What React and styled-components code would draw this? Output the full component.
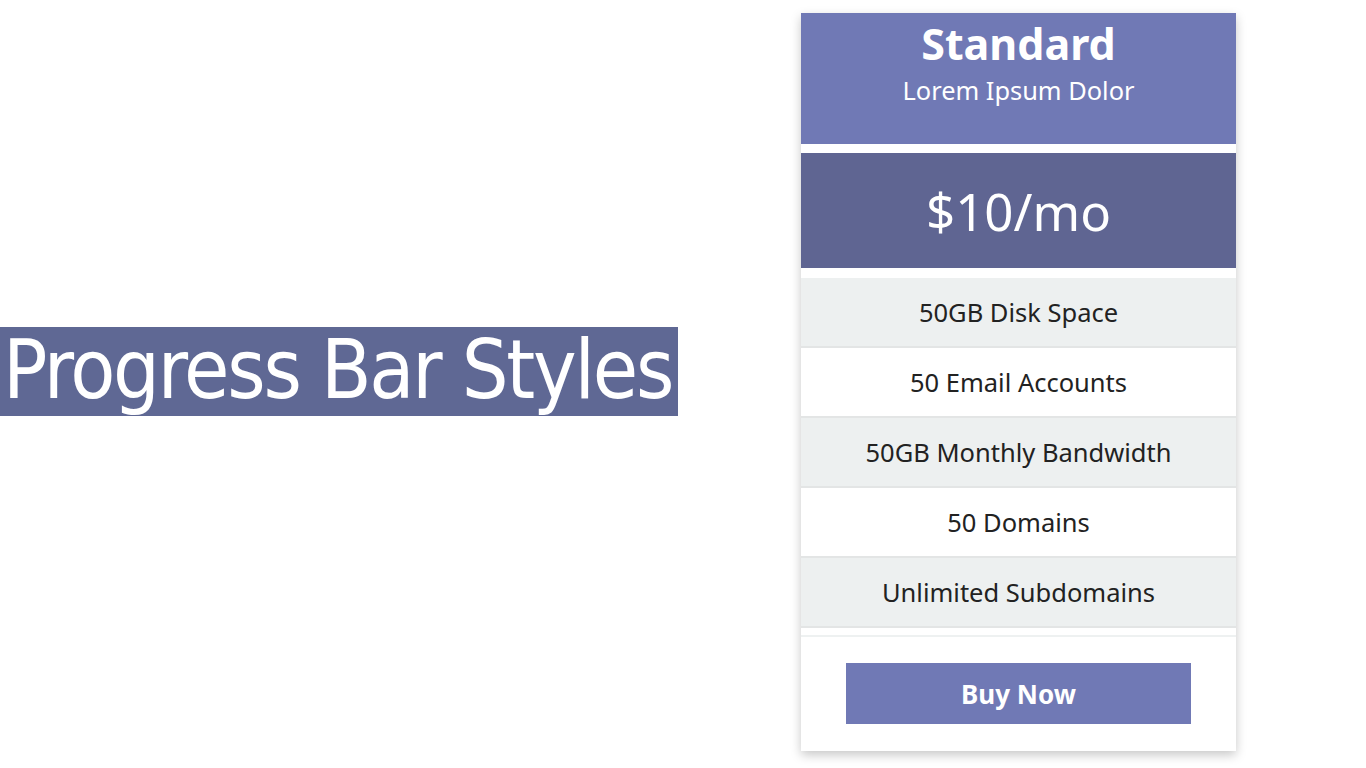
import React from 'react'
import styled, { createGlobalStyle } from 'styled-components'

const GlobalStyle = createGlobalStyle`
  html, body {
    margin: 0;
    padding: 0;
    background: #fff;
  }
  body {
    font-family: "Noto Sans", "Open Sans", sans-serif;
  }
`

const Page = styled.div`
  width: 1366px;
  height: 768px;
  overflow: hidden;
  display: flex;
  align-items: flex-start;
`

const Title = styled.h1`
  margin: 327px 0 0;
  width: 678px;
  height: 89px;
  box-sizing: border-box;
  padding-left: 3px;
  background: #5f6894;
  color: #fff;
  font-family: "DejaVu Sans Condensed", "Liberation Sans Narrow", "Liberation Sans", sans-serif;
  font-weight: 400;
  font-size: 82px;
  letter-spacing: -2.2px;
  line-height: 86px;
  white-space: nowrap;
  flex-shrink: 0;
`

const Card = styled.div`
  margin: 13px 0 0 123px;
  width: 435px;
  background: #fff;
  box-shadow: 0 4px 10px rgba(0, 0, 0, 0.22);
  display: flex;
  flex-direction: column;
`

const Header = styled.div`
  height: 131px;
  background: #7079b5;
  color: #fff;
  text-align: center;
  padding-top: 3px;
  box-sizing: border-box;
`

const PlanName = styled.div`
  font-size: 43px;
  font-weight: 700;
  line-height: 56px;
`

const PlanSub = styled.div`
  font-size: 25.4px;
  line-height: 36px;
`

const Price = styled.div`
  margin-top: 9px;
  height: 115px;
  background: #5f6592;
  color: #fff;
  font-size: 51px;
  display: flex;
  align-items: center;
  justify-content: center;
`

const Features = styled.ul`
  list-style: none;
  margin: 10px 0 0;
  padding: 0;
`

const Feature = styled.li`
  height: 68px;
  display: flex;
  align-items: center;
  justify-content: center;
  font-size: 25.5px;
  color: #222;
  background: ${p => (p.$shaded ? '#edf0f0' : '#fff')};
  border-bottom: 2px solid #e3e5e5;
`

const Spacer = styled.li`
  height: 7px;
  border-bottom: 2px solid #eef1f1;
`

const Footer = styled.div`
  padding: 26px 45px 27px;
  display: flex;
  justify-content: center;
`

const BuyButton = styled.button`
  width: 345px;
  height: 61px;
  border: none;
  background: #7079b5;
  color: #fff;
  font-family: "Noto Sans", sans-serif;
  font-size: 26px;
  font-weight: 700;
  cursor: pointer;
`

const features = [
  '50GB Disk Space',
  '50 Email Accounts',
  '50GB Monthly Bandwidth',
  '50 Domains',
  'Unlimited Subdomains',
]

export default function App() {
  return (
    <Page>
      <GlobalStyle />
      <Title>Progress Bar Styles</Title>
      <Card>
        <Header>
          <PlanName>Standard</PlanName>
          <PlanSub>Lorem Ipsum Dolor</PlanSub>
        </Header>
        <Price>$10/mo</Price>
        <Features>
          {features.map((f, i) => (
            <Feature key={f} $shaded={i % 2 === 0}>{f}</Feature>
          ))}
          <Spacer />
        </Features>
        <Footer>
          <BuyButton>Buy Now</BuyButton>
        </Footer>
      </Card>
    </Page>
  )
}
